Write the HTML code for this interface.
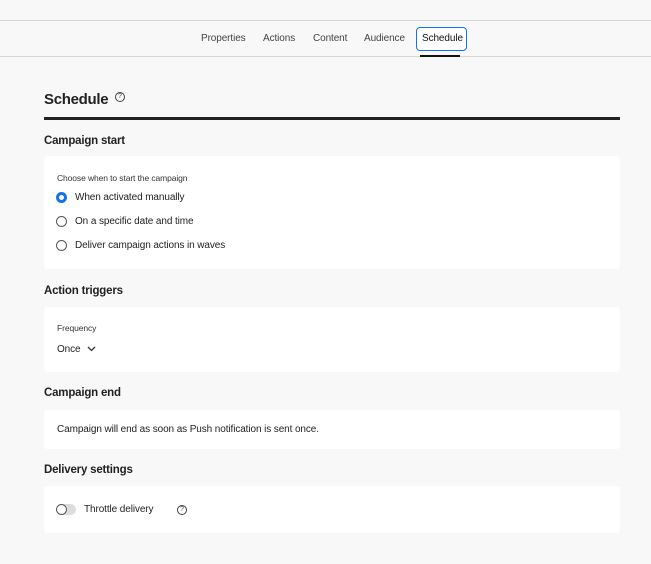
<!DOCTYPE html>
<html><head><style>
*{margin:0;padding:0;box-sizing:border-box}
body{width:651px;height:564px;background:#f8f8f8;font-family:"Liberation Sans",sans-serif;color:#222;position:relative;overflow:hidden}
.a{position:absolute}
.t{font-size:10px;color:#444;top:33px;letter-spacing:-0.1px}
.card{position:absolute;left:44px;width:576px;background:#fff;border-radius:3px}
h3{position:absolute;left:44px;font-size:11.5px;font-weight:bold;color:#222;letter-spacing:-0.2px}
.s{font-size:10px;color:#222;position:absolute;letter-spacing:-0.1px}
.r{position:absolute;left:56px;width:11px;height:11px;border:1.3px solid #555;border-radius:50%}
</style></head><body>
<div class="a" style="left:0;top:20px;width:651px;height:1px;background:#d6d6d6"></div>
<div class="a" style="left:0;top:56px;width:651px;height:1px;background:#d6d6d6"></div>
<div class="a t" style="left:201px">Properties</div>
<div class="a t" style="left:263px">Actions</div>
<div class="a t" style="left:313px">Content</div>
<div class="a t" style="left:364px">Audience</div>
<div class="a" style="left:416px;top:27px;width:51px;height:24px;border:1.3px solid #1473e6;border-radius:4px;background:#fff"></div>
<div class="a t" style="left:422px;color:#111">Schedule</div>
<div class="a" style="left:420px;top:55px;width:40px;height:2px;background:#111"></div>
<div class="a" style="left:44px;top:91px;font-size:15px;font-weight:bold;color:#222;letter-spacing:-0.3px">Schedule</div>
<div class="a" style="left:115px;top:92px;width:10px;height:10px;border:1.2px solid #444;border-radius:50%;font-size:7px;text-align:center;line-height:8px;color:#444">?</div>
<div class="a" style="left:44px;top:117px;width:576px;height:3px;background:#222"></div>
<h3 style="top:135px">Campaign start</h3>
<div class="card" style="top:156px;height:113px"></div>
<div class="s" style="left:57px;top:173px;font-size:8.5px;color:#333">Choose when to start the campaign</div>
<div class="r" style="top:192px;border:3px solid #1473e6"></div>
<div class="s" style="left:75px;top:192px">When activated manually</div>
<div class="r" style="top:216px"></div>
<div class="s" style="left:75px;top:216px">On a specific date and time</div>
<div class="r" style="top:240px"></div>
<div class="s" style="left:75px;top:240px">Deliver campaign actions in waves</div>
<h3 style="top:285px">Action triggers</h3>
<div class="card" style="top:307px;height:65px"></div>
<div class="s" style="left:57px;top:323px;font-size:8.5px;color:#333">Frequency</div>
<div class="s" style="left:57px;top:344px">Once</div>
<svg class="a" style="left:87px;top:346px" width="9" height="6"><path d="M1 1L4.5 4.5L8 1" stroke="#333" stroke-width="1.3" fill="none"/></svg>
<h3 style="top:387px">Campaign end</h3>
<div class="card" style="top:410px;height:39px"></div>
<div class="s" style="left:57px;top:424px">Campaign will end as soon as Push notification is sent once.</div>
<h3 style="top:464px">Delivery settings</h3>
<div class="card" style="top:486px;height:47px"></div>
<div class="a" style="left:56px;top:504px;width:20px;height:11px;border-radius:6px;background:#ddd"></div>
<div class="a" style="left:56px;top:504px;width:11px;height:11px;border-radius:50%;border:1.3px solid #555;background:#fff"></div>
<div class="s" style="left:84px;top:504px">Throttle delivery</div>
<div class="a" style="left:177px;top:505px;width:10px;height:10px;border:1.2px solid #444;border-radius:50%;font-size:7px;text-align:center;line-height:8px;color:#444">?</div>
</body></html>
